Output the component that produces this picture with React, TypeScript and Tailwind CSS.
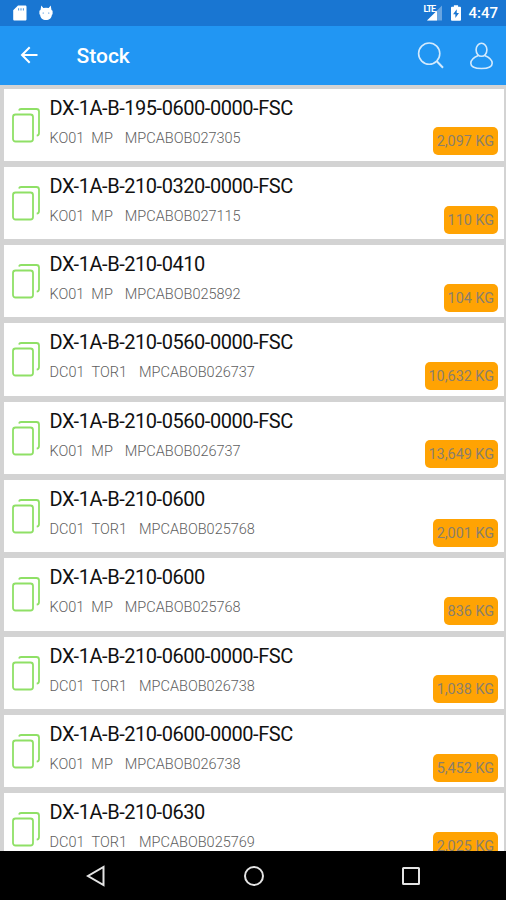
import React from 'react';

interface StockItem {
  code: string;
  plant: string;
  location: string;
  batch: string;
  weight: string;
}

const items: StockItem[] = [
  { code: 'DX-1A-B-195-0600-0000-FSC', plant: 'KO01', location: 'MP', batch: 'MPCABOB027305', weight: '2,097 KG' },
  { code: 'DX-1A-B-210-0320-0000-FSC', plant: 'KO01', location: 'MP', batch: 'MPCABOB027115', weight: '110 KG' },
  { code: 'DX-1A-B-210-0410', plant: 'KO01', location: 'MP', batch: 'MPCABOB025892', weight: '104 KG' },
  { code: 'DX-1A-B-210-0560-0000-FSC', plant: 'DC01', location: 'TOR1', batch: 'MPCABOB026737', weight: '10,632 KG' },
  { code: 'DX-1A-B-210-0560-0000-FSC', plant: 'KO01', location: 'MP', batch: 'MPCABOB026737', weight: '13,649 KG' },
  { code: 'DX-1A-B-210-0600', plant: 'DC01', location: 'TOR1', batch: 'MPCABOB025768', weight: '2,001 KG' },
  { code: 'DX-1A-B-210-0600', plant: 'KO01', location: 'MP', batch: 'MPCABOB025768', weight: '836 KG' },
  { code: 'DX-1A-B-210-0600-0000-FSC', plant: 'DC01', location: 'TOR1', batch: 'MPCABOB026738', weight: '1,038 KG' },
  { code: 'DX-1A-B-210-0600-0000-FSC', plant: 'KO01', location: 'MP', batch: 'MPCABOB026738', weight: '5,452 KG' },
  { code: 'DX-1A-B-210-0630', plant: 'DC01', location: 'TOR1', batch: 'MPCABOB025769', weight: '2,025 KG' },
];

const StatusBar: React.FC = () => (
  <div className="flex h-[26px] shrink-0 items-center justify-between bg-[#1976d2] pl-[13px] pr-2 text-white">
    <div className="flex items-center gap-3">
      <svg width="14" height="16" viewBox="0 0 14 16" fill="currentColor">
        <path d="M5 .5h7.200c.8 0 1.300.5 1.300 1.300v12.400c0 .8-.5 1.300-1.300 1.300H1.500c-.8 0-1.300-.5-1.300-1.300V5.300z" />
        <path d="M5.600 3.200v2.300M8 3.200v2.300M10.400 3.200v2.300" stroke="#1976d2" strokeWidth="1.100" opacity=".7" />
      </svg>
      <svg width="14" height="16" viewBox="0 0 14 16">
        <path fill="#fff" d="M2.300.4 4.300 3Q7 2.500 9.700 3L11.700.4l.8 4.600 1.100.8v3.400l-.7.500c-.3 3.600-2.600 5.300-5.900 5.300S1.400 13.300 1.100 9.700L.4 9.200V5.800L1.500 5z" />
        <circle cx="4.200" cy="8" r=".6" fill="#1976d2" />
        <circle cx="9.800" cy="8" r=".6" fill="#1976d2" />
      </svg>
    </div>
    <div className="flex items-center">
      <div className="relative mr-[9px] h-4 w-[19px]">
        <svg className="absolute right-0 top-0" width="15" height="16" viewBox="0 0 15 16" fill="#fff">
          <path opacity=".35" d="M15 .5v15H0z" />
          <path d="M10 5.700v9.800H0z" />
        </svg>
        <span className="absolute left-0 top-0 text-[9px] font-bold leading-[8px] tracking-[-0.9px]">LTE</span>
      </div>
      <svg className="mr-[7px]" width="10" height="16" viewBox="0 0 11 17">
        <path fill="#fff" d="M3.200 0h4.600v1.700H10c.6 0 1 .4 1 1V16c0 .6-.4 1-1 1H1c-.6 0-1-.4-1-1V2.700c0-.6.400-1 1-1h2.200z" />
        <path fill="#1976d2" d="M6.300 4.500 2.300 10h2.500v4L8.800 8.500H6.300z" />
      </svg>
      <span className="text-[15px] font-medium leading-4">4:47</span>
    </div>
  </div>
);

const AppBar: React.FC = () => (
  <header className="flex h-[58.5px] shrink-0 items-center bg-[#2196f3] pl-[20px] pr-[12px] text-white">
    <svg width="18" height="18" viewBox="0 0 18 18" fill="none" stroke="currentColor" strokeWidth="2">
      <path d="M17.500 9H2M9.700 1.300 2 9l7.700 7.700" />
    </svg>
    <h1 className="ml-[38.500px] mt-[2px] flex-1 text-[21px] font-medium leading-6">Stock</h1>
    <svg className="mr-[25px]" width="28" height="28" viewBox="0 0 28 28" fill="none" stroke="#d3eafd" strokeWidth="1.600">
      <circle cx="12.200" cy="12.600" r="10.600" />
      <path d="m19.800 20.300 6.200 6.500" strokeWidth="2" />
    </svg>
    <svg className="mt-[2px]" width="24" height="28" viewBox="0 0 24 28" fill="none" stroke="#d3eafd" strokeWidth="1.600">
      <ellipse cx="11.500" cy="7.800" rx="5.400" ry="6.500" />
      <path d="M8.300 13.500C3.800 15.300.8 18 .8 21.300c0 3.500 4.400 5.200 10.700 5.200s10.700-1.700 10.700-5.200c0-3.300-3-6-7.500-7.800" />
    </svg>
  </header>
);

const CopyIcon: React.FC = () => (
  <svg width="28" height="36" viewBox="0 0 28 36" fill="none" stroke="#8fe066" strokeWidth="1.800">
    <rect x="1" y="7.500" width="20" height="27" rx="2.500" />
    <path d="M7 3.500C7.300 2.300 8 2 9 2h15.500C26 2 27 3 27 4.500V26c0 1.500-.7 2.500-2.300 2.700" />
  </svg>
);

const StockCard: React.FC<{ item: StockItem }> = ({ item }) => (
  <li className="flex h-[72.300px] shrink-0 bg-white pl-[8px]">
    <div className="mt-[18px] w-[37.500px] shrink-0">
      <CopyIcon />
    </div>
    <div className="min-w-0 flex-1">
      <p className="mt-[7px] text-[20px] leading-6 tracking-[-0.45px] text-[#111]">{item.code}</p>
      <div className="mt-[9px] flex text-[14.500px] font-light leading-5 text-[#606060]">
        <span className="mr-[7px]">{item.plant}</span>
        <span className="mr-[12px]">{item.location}</span>
        <span>{item.batch}</span>
      </div>
    </div>
    <span className="mb-[5.500px] mr-[6px] h-[28px] self-end rounded-[5px] bg-[#ffa303] px-1 text-[14.400px] leading-[30px] text-[#8a7f6c]">
      {item.weight}
    </span>
  </li>
);

const NavBar: React.FC = () => (
  <nav className="flex h-[49px] shrink-0 items-center justify-between bg-black pl-[85px] pr-[84px]">
    <svg width="22" height="22" viewBox="0 0 22 22" fill="none" stroke="#e4e4e4" strokeWidth="2">
      <path d="M18.500 2v18L3 11z" />
    </svg>
    <svg width="22" height="22" viewBox="0 0 22 22" fill="none" stroke="#e4e4e4" strokeWidth="2">
      <circle cx="11" cy="11" r="9" />
    </svg>
    <svg width="22" height="22" viewBox="0 0 22 22" fill="none" stroke="#e4e4e4" strokeWidth="2">
      <rect x="3" y="3" width="16" height="16" rx=".5" />
    </svg>
  </nav>
);

const App: React.FC = () => {
  return (
    <div className="flex h-[900px] w-[506px] flex-col overflow-hidden bg-black font-['Roboto',sans-serif]">
      <StatusBar />
      <AppBar />
      <ul className="flex min-h-0 flex-1 flex-col gap-[6px] overflow-hidden bg-[#d3d3d3] pl-1 pr-[2px] pt-[4px]">
        {items.map((item, index) => (
          <StockCard key={index} item={item} />
        ))}
      </ul>
      <NavBar />
    </div>
  );
};

export default App;
